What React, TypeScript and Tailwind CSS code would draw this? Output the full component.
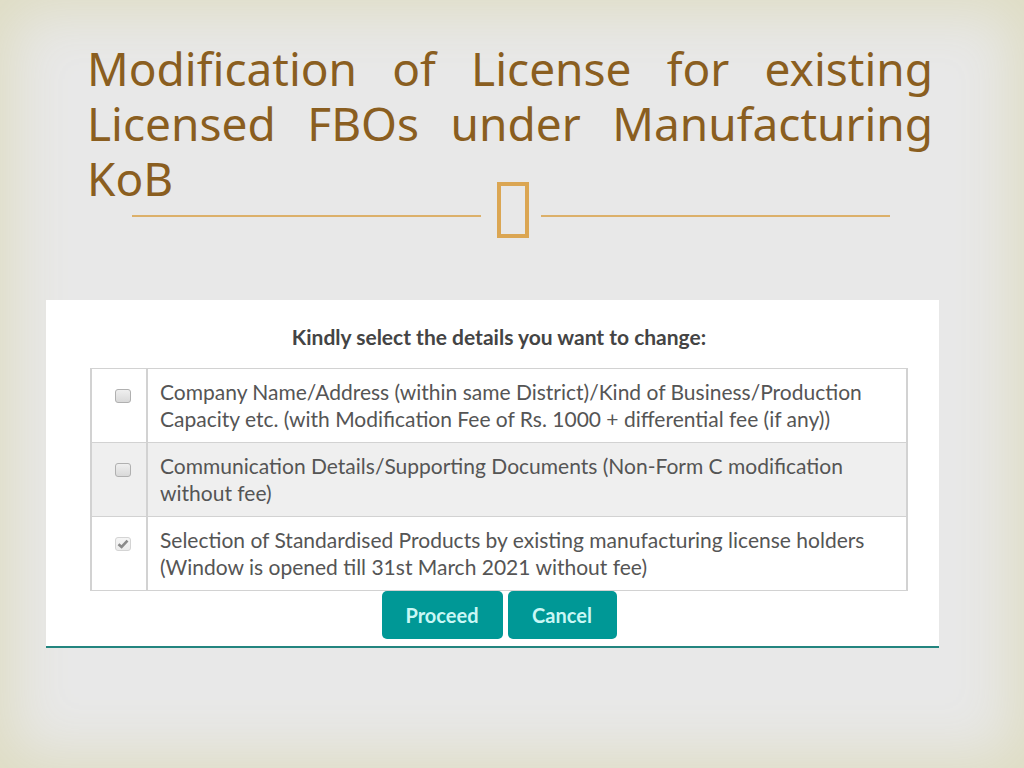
import React, { useState } from 'react';

interface ChangeOption {
  id: string;
  lines: string[];
  muted?: boolean;
}

const OPTIONS: ChangeOption[] = [
  {
    id: 'company',
    lines: [
      'Company Name/Address (within same District)/Kind of Business/Production',
      'Capacity etc. (with Modification Fee of Rs. 1000 + differential fee (if any))',
    ],
  },
  {
    id: 'communication',
    lines: [
      'Communication Details/Supporting Documents (Non-Form C modification',
      'without fee)',
    ],
  },
  {
    id: 'products',
    lines: [
      'Selection of Standardised Products by existing manufacturing license holders',
      '(Window is opened till 31st March 2021 without fee)',
    ],
    muted: true,
  },
];

const Divider: React.FC = () => (
  <div className="-mt-6 flex items-center pl-[132px] pr-[134px]">
    <div className="h-0 flex-1 border-t-2 border-[#dcb06a]" />
    <div className="mb-3 ml-4 mr-3 h-14 w-8 border-4 border-[#dba653]" />
    <div className="h-0 flex-1 border-t-2 border-[#dcb06a]" />
  </div>
);

interface OptionRowProps {
  option: ChangeOption;
  checked: boolean;
  onToggle: (id: string) => void;
}

const OptionRow: React.FC<OptionRowProps> = ({ option, checked, onToggle }) => (
  <tr className="border-y border-[#d2d2d2] even:bg-[#efefef]">
    <td className="w-14 border-x-2 border-[#d2d2d2] pl-2 pt-5 align-top">
      <span className="mx-auto grid h-[14px] w-4 place-items-center">
        <input
          id={option.id}
          type="checkbox"
          checked={checked}
          onChange={() => onToggle(option.id)}
          className={`col-start-1 row-start-1 h-[14px] w-4 appearance-none rounded-[3px] border bg-linear-to-b ${
            option.muted ? 'border-[#d4d4d4] from-[#f5f5f5] to-[#ececec]' : 'border-[#b0b0b0] from-[#efefef] to-[#d9d9d9]'
          }`}
        />
        {checked && (
          <svg className="pointer-events-none col-start-1 row-start-1 h-[10px] w-3" viewBox="0 0 12 10" fill="none">
            <path d="M1.5 5.2 4.6 8 10.5 1.6" stroke="#8b8b8b" strokeWidth="2.6" />
          </svg>
        )}
      </span>
    </td>
    <td className="border-r-2 border-[#d2d2d2] pb-[10px] pl-3 pt-[9px]">
      <label htmlFor={option.id} className="block">
        {option.lines.map((line) => (
          <span key={line} className="block whitespace-nowrap">{line}</span>
        ))}
      </label>
    </td>
  </tr>
);

const App: React.FC = () => {
  const [selected, setSelected] = useState<string[]>(['products']);

  const handleToggle = (id: string) => {
    setSelected((prev) => (prev.includes(id) ? prev.filter((item) => item !== id) : [...prev, id]));
  };

  return (
    <main className="min-h-screen bg-[#e8e8e8] pt-[41px] shadow-[inset_0_0_56px_12px_#dedcc2]">
      <h1 className="pl-[87px] pr-[91px] text-justify font-['Noto_Sans',sans-serif] text-[46px] leading-[55px] text-[#8a5e20]">
        Modification of License for existing Licensed FBOs under Manufacturing KoB
      </h1>
      <Divider />

      <form
        onSubmit={(e) => e.preventDefault()}
        className="ml-[46px] mr-[85px] mt-[50px] border-b-2 border-[#23857f] bg-white pb-[7px] pl-11 pr-[31px] pt-[23px] font-[Lato,sans-serif] text-[21px] leading-[27px] text-[#555555]"
      >
        <h2 className="text-center font-bold text-[#444444]">Kindly select the details you want to change:</h2>
        <table className="mt-[18px] w-full border-collapse">
          <tbody>
            {OPTIONS.map((option) => (
              <OptionRow
                key={option.id}
                option={option}
                checked={selected.includes(option.id)}
                onToggle={handleToggle}
              />
            ))}
          </tbody>
        </table>
        <div className="flex justify-center gap-[5px] text-xl font-bold text-[#c9f7f5]">
          <button type="submit" className="h-12 w-[121px] rounded-[5px] bg-[#009896]">Proceed</button>
          <button type="button" onClick={() => setSelected([])} className="h-12 w-[109px] rounded-[5px] bg-[#009896]">
            Cancel
          </button>
        </div>
      </form>
    </main>
  );
};

export default App;
